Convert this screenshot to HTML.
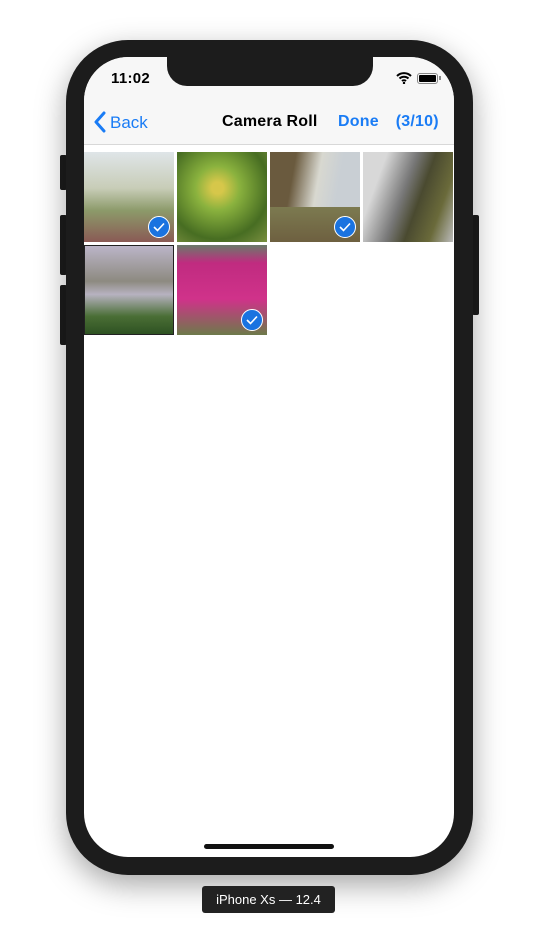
<!DOCTYPE html><html><head><style>
body{margin:0;width:538px;height:950px;background:#fff;position:relative;overflow:hidden;font-family:"Liberation Sans",sans-serif}
.phone{position:absolute;left:66px;top:40px;width:407px;height:835px;background:#1c1c1c;border-radius:62px;box-shadow:0 10px 30px rgba(0,0,0,.35)}
.btn{position:absolute;background:#1c1c1c;width:7px;border-radius:2px}
.screen{position:absolute;left:84px;top:57px;width:370px;height:800px;background:#fff;border-radius:44px;overflow:hidden}
.notch{position:absolute;left:83px;top:0;width:206px;height:29px;background:#1c1c1c;border-radius:0 0 20px 20px}
.nav{position:absolute;left:0;top:0;width:370px;height:87px;background:#f7f7f7;border-bottom:1px solid #d8d8d8}
.t{position:absolute;font-size:17px}
.tile{position:absolute;width:90px;height:90px}
.chk{position:absolute;right:4px;bottom:4px;width:20px;height:20px;border-radius:50%;background:#1a73e0;border:1.5px solid #fff}
.chk svg{position:absolute;left:4px;top:5px}
</style></head><body>
<div class="btn" style="left:60px;top:155px;height:35px"></div>
<div class="btn" style="left:60px;top:215px;height:60px"></div>
<div class="btn" style="left:60px;top:285px;height:60px"></div>
<div class="btn" style="left:472px;top:215px;height:100px"></div>
<div class="phone"></div>
<div class="screen">
<div class="nav">
<div class="t" style="left:27px;top:13px;font-size:15px;font-weight:bold;letter-spacing:0.3px">11:02</div>
<svg style="position:absolute;left:312px;top:15px" width="16" height="12" viewBox="0 0 16 12"><path d="M1 4a10 10 0 0 1 14 0M3.5 6.5a6.5 6.5 0 0 1 9 0M6 9a3 3 0 0 1 4 0" stroke="#000" stroke-width="2" fill="none"/><circle cx="8" cy="11" r="1.2"/></svg>
<div style="position:absolute;left:333px;top:16px;width:19px;height:9px;border:1px solid #888;border-radius:3px"><div style="margin:1px;height:7px;background:#000;border-radius:1px"></div></div>
<div style="position:absolute;left:355px;top:19px;width:2px;height:4px;background:#888"></div>
<div class="notch"></div>
<svg style="position:absolute;left:9px;top:54px" width="13" height="22" viewBox="0 0 13 22"><path d="M11 2 L3 11 L11 20" stroke="#1a7cf5" stroke-width="3" fill="none" stroke-linecap="round" stroke-linejoin="round"/></svg>
<div class="t" style="left:26px;top:56px;color:#1a7cf5">Back</div>
<div class="t" style="left:138px;top:56px;color:#000;font-size:16px;font-weight:bold;letter-spacing:0.2px">Camera Roll</div>
<div class="t" style="left:254px;top:56px;color:#1a7cf5;font-size:16px;font-weight:bold;letter-spacing:0.2px;word-spacing:1px">Done&nbsp;&nbsp;&nbsp;(3/10)</div>
</div>
<div class="tile" style="left:0;top:95px;background:linear-gradient(#dfe5e8,#c8cdb8 40%,#8c9a6a 65%,#8a5a55)"><div class="chk"><svg width="12" height="10" viewBox="0 0 12 10"><path d="M1 5l3.5 3.5L11 1.5" stroke="#fff" stroke-width="1.6" fill="none"/></svg></div></div>
<div class="tile" style="left:93px;top:95px;background:radial-gradient(circle at 45% 40%,#d6c74a 8%,#8ab23e 30%,#476d22 70%,#7a8f40)"></div>
<div class="tile" style="left:186px;top:95px;background:linear-gradient(100deg,#6a5a3e 25%,#d8d8d0 50%,#c9cfd4 70%),linear-gradient(#ccc,#888)"><div style="position:absolute;left:0;bottom:0;width:90px;height:35px;background:linear-gradient(#7c7a50,#6e6040)"></div><div class="chk"><svg width="12" height="10" viewBox="0 0 12 10"><path d="M1 5l3.5 3.5L11 1.5" stroke="#fff" stroke-width="1.6" fill="none"/></svg></div></div>
<div class="tile" style="left:279px;top:95px;background:linear-gradient(110deg,#d8d8d8 20%,#777 45%,#4a4a30 60%,#6a6a3a 80%,#bbb)"></div>
<div class="tile" style="left:0;top:188px;background:linear-gradient(#bbb5c8,#8d8a80 40%,#b7b2c0 55%,#4a6e35 80%,#2e5222);border:1px solid #222;box-sizing:border-box"></div>
<div class="tile" style="left:93px;top:188px;background:linear-gradient(#6a7a6a 0%,#c02b80 20%,#d0328a 60%,#6d7a4a)"><div class="chk"><svg width="12" height="10" viewBox="0 0 12 10"><path d="M1 5l3.5 3.5L11 1.5" stroke="#fff" stroke-width="1.6" fill="none"/></svg></div></div>
<div style="position:absolute;left:120px;top:787px;width:130px;height:5px;border-radius:3px;background:#111"></div>
</div>
<div style="position:absolute;left:202px;top:886px;width:133px;height:27px;background:#222;border-radius:3px;color:#fff;font-size:13px;text-align:center;line-height:27px">iPhone Xs — 12.4</div>
</body></html>
